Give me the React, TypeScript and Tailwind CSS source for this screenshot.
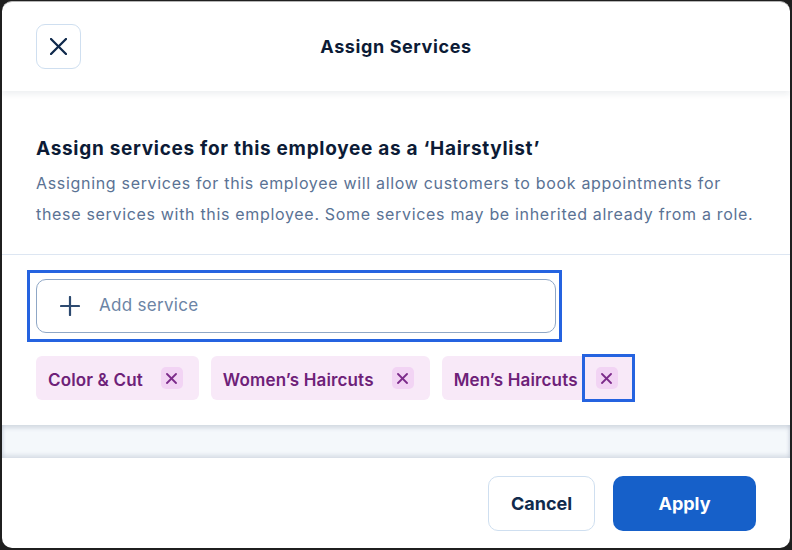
const services = ["Color & Cut", "Women’s Haircuts", "Men’s Haircuts"];

const font = { fontFamily: "Inter, 'Noto Sans', sans-serif" };

const Cross = ({ size, stroke, className }: { size: number; stroke: number; className?: string }) => (
  <svg width={size} height={size} viewBox={`0 0 ${size} ${size}`} className={className} fill="none" stroke="currentColor" strokeWidth={stroke} strokeLinecap="round">
    <line x1={1} y1={1} x2={size - 1} y2={size - 1} />
    <line x1={size - 1} y1={1} x2={1} y2={size - 1} />
  </svg>
);

export default function App() {
  return (
    <div className="w-[792px] h-[550px] bg-[#1f1f1f] pl-[2px] pt-[1px] pr-[2px] pb-[2px]" style={font}>
      <div className="h-full bg-white rounded-[10px] flex flex-col overflow-hidden border-t border-[#b5b5b5]">
        {/* header */}
        <div className="relative h-[89px] flex items-center justify-center shrink-0 shadow-[0_3px_6px_rgba(30,50,80,0.08)] z-10">
          <button className="absolute left-[34px] top-[22px] w-[45px] h-[45px] rounded-[9px] border border-[#cfdff0] flex items-center justify-center text-[#102a4c]">
            <Cross size={17} stroke={2.3} />
          </button>
          <h1 className="text-[18px] font-bold text-[#0c1b36] tracking-[0.6px]">Assign Services</h1>
        </div>

        {/* body */}
        <div className="flex-1 flex flex-col">
          <div className="px-[34px] pt-[44px] pb-[24px] border-b border-[#dde6f2]">
            <h2 className="text-[19px] font-bold text-[#0c1b36] leading-[28px] tracking-[0.7px]">
              Assign services for this employee as a ‘Hairstylist’
            </h2>
            <p className="mt-[5px] text-[16px] leading-[31px] text-[#5a7294] tracking-[0.68px]">
              Assigning services for this employee will allow customers to book appointments for these services with this employee. Some services may be inherited already from a role.
            </p>
          </div>

          <div className="px-[34px] pt-[15px]">
            <div className="w-[535px] -ml-[9px] pl-[6px] pr-[3px] py-[6px] border-[3px] border-[#2563e0]">
              <div className="h-[54px] rounded-[10px] border border-[#8fa7c6] flex items-center pl-[23px] gap-[19px]">
                <svg width="20" height="20" viewBox="0 0 20 20" className="text-[#2d4a70]" stroke="currentColor" strokeWidth="2.2" strokeLinecap="round">
                  <line x1="10" y1="1" x2="10" y2="19" />
                  <line x1="1" y1="10" x2="19" y2="10" />
                </svg>
                <span className="text-[17px] text-[#6c84a5] tracking-[0.3px]">Add service</span>
              </div>
            </div>

            <div className="flex gap-[12px] mt-[14px]">
              {services.map((s, i) => (
                <div key={s} className="h-[44px] rounded-[6px] bg-[#f8e9f8] flex items-center pl-[12px] pr-[16px] gap-[18px]">
                  <span className="text-[17px] leading-[20px] font-semibold text-[#6e2178] tracking-[0.15px] translate-y-[2px]">{s}</span>
                  <span className="relative">
                    <span className="w-[22px] h-[22px] rounded-[5px] bg-[#f2d4f4] flex items-center justify-center text-[#7c2a8a]">
                      <Cross size={11} stroke={1.8} />
                    </span>
                    {i === 2 && (
                      <span className="absolute -left-[14px] -top-[13px] w-[53px] h-[48px] border-[3px] border-[#2563e0]" />
                    )}
                  </span>
                </div>
              ))}
            </div>
          </div>

          <div className="mt-auto h-[33px] bg-[#f4f8fb] shadow-[inset_0_3px_4px_rgba(60,80,110,0.18),inset_0_-3px_4px_rgba(60,80,110,0.14)]" />
        </div>

        {/* footer */}
        <div className="h-[90px] shrink-0 flex items-start justify-end gap-[18px] pr-[34px] pt-[18px]">
          <button className="w-[107px] h-[55px] rounded-[10px] border border-[#cfdff0] text-[18px] font-bold text-[#102a4c]">
            Cancel
          </button>
          <button className="w-[143px] h-[55px] rounded-[10px] bg-[#1660c9] text-[18px] font-bold text-white">
            Apply
          </button>
        </div>
      </div>
    </div>
  );
}
